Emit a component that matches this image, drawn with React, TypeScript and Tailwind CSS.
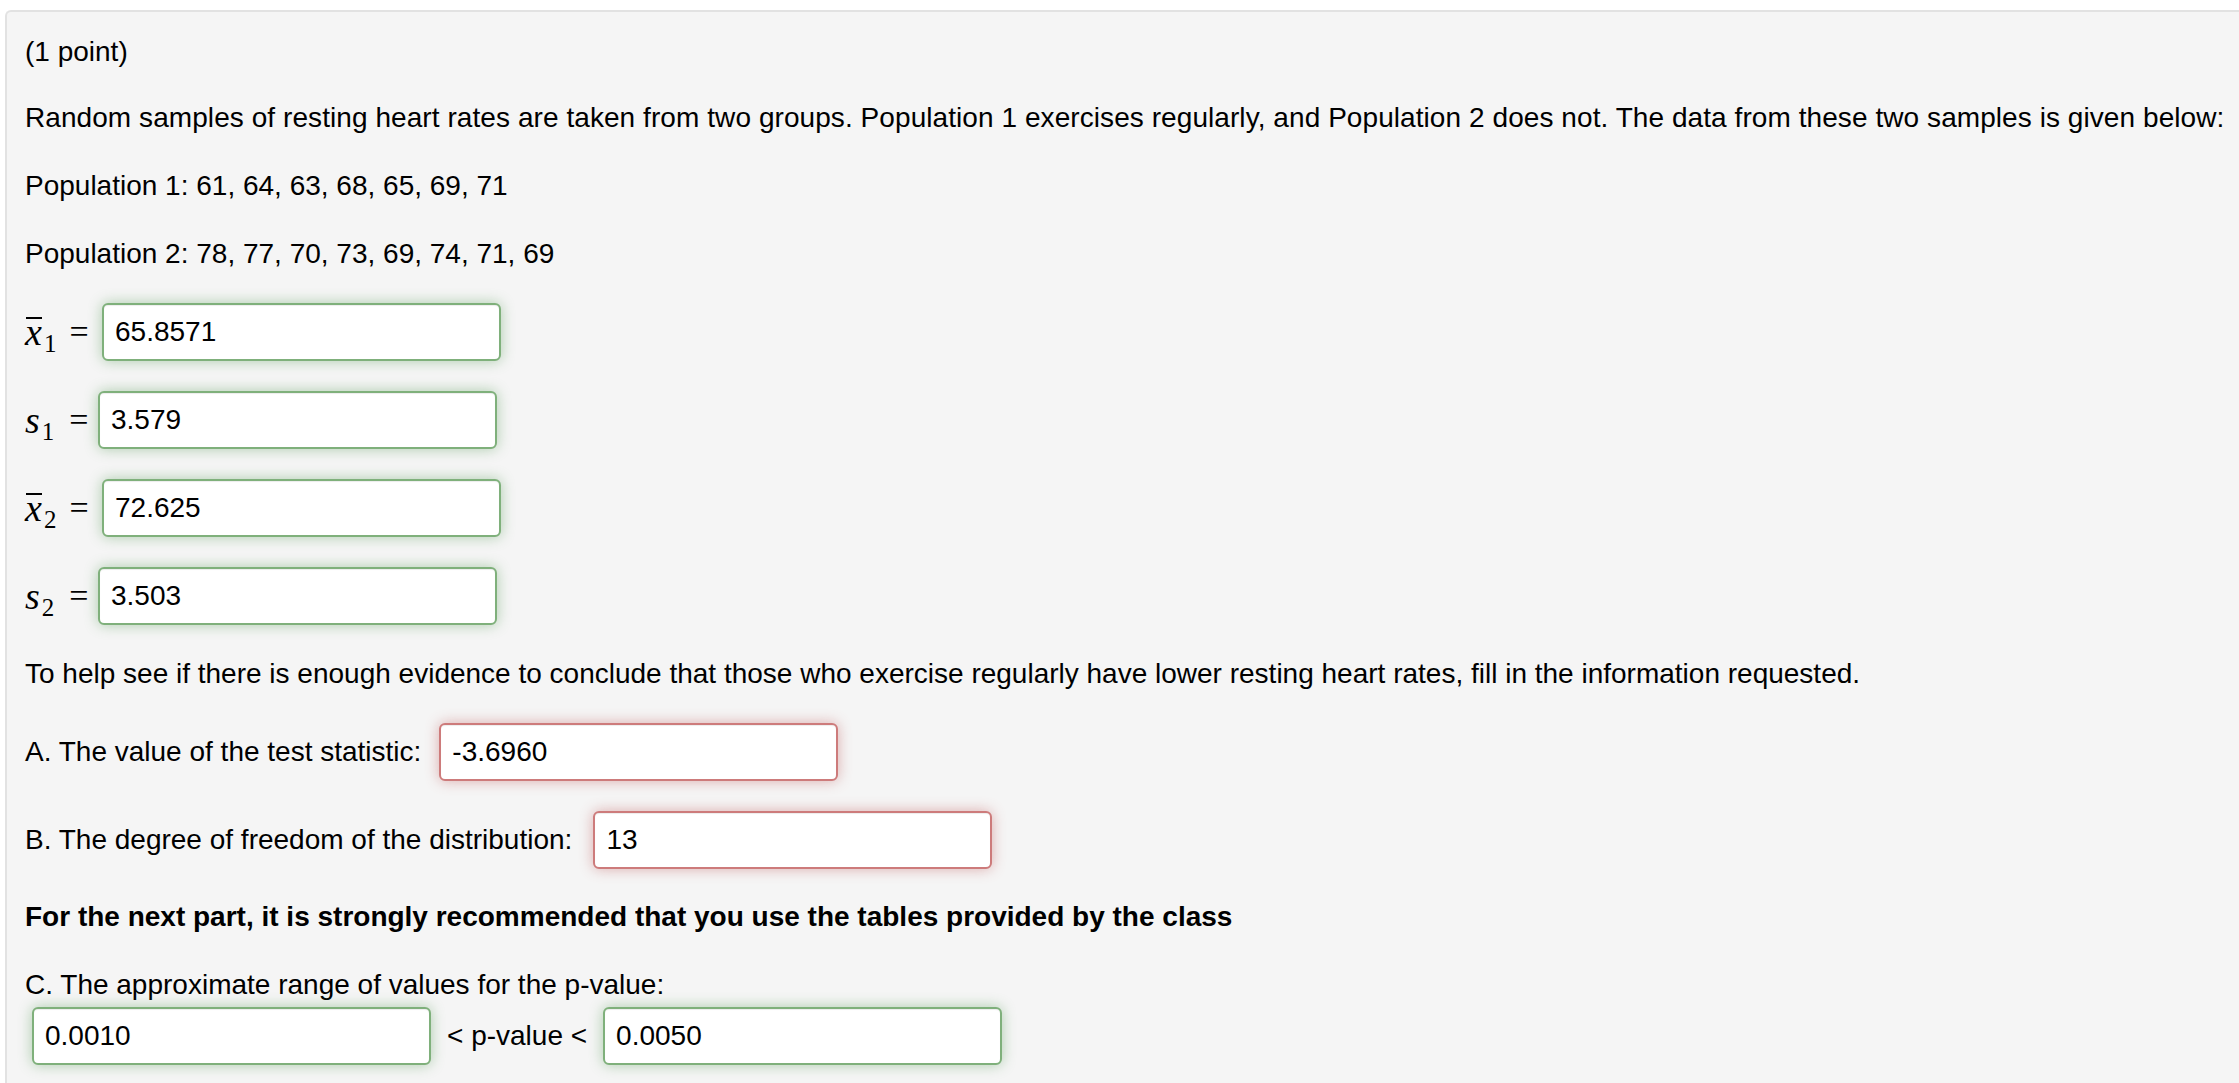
import type { ReactNode } from 'react';

type Tone = 'ok' | 'bad';

const toneClass: Record<Tone, string> = {
  ok: 'border-[#7fb07b] shadow-[inset_0_1px_1px_rgba(0,0,0,0.075),0_0_14px_rgba(81,153,81,0.45)]',
  bad: 'border-[#cd7b7b] shadow-[inset_0_1px_1px_rgba(0,0,0,0.075),0_0_14px_rgba(191,84,84,0.45)]',
};

function Answer({ value, tone }: { value: string; tone: Tone }) {
  return (
    <input
      readOnly
      value={value}
      className={`h-[58px] w-[399px] shrink-0 rounded-[6px] border-2 bg-white pl-[11px] text-[28px] text-black outline-none ${toneClass[tone]}`}
    />
  );
}

function MathVar({ letter, sub, bar }: { letter: string; sub: string; bar?: boolean }) {
  return (
    <span className="inline-flex items-baseline font-['Liberation_Serif','Times_New_Roman',serif] text-[38px] leading-none text-black">
      <span className="relative italic">
        {bar && <span className="absolute left-[1px] right-[0px] top-[4px] h-[2px] bg-black" />}
        {letter}
      </span>
      <span className="relative top-[7px] ml-[2px] text-[25px] not-italic">{sub}</span>
    </span>
  );
}

function VarRow({ label, value, wide }: { label: ReactNode; value: string; wide?: boolean }) {
  return (
    <div className="flex h-[58px] items-center">
      <div className={`flex items-center ${wide ? 'w-[77px]' : 'w-[73px]'}`}>
        {label}
        <span className={`font-['Liberation_Serif','Times_New_Roman',serif] text-[34px] leading-none ${wide ? 'ml-[13px]' : 'ml-[15px]'}`}>=</span>
      </div>
      <Answer value={value} tone="ok" />
    </div>
  );
}

export default function App() {
  return (
    <div className="h-[1083px] w-[2239px] overflow-hidden bg-white font-['Liberation_Sans',Arial,Helvetica,sans-serif] text-[28px] leading-[34px] text-black">
      <div className="ml-[5px] mt-[10px] min-h-[1100px] rounded-tl-[6px] border-l-2 border-t-2 border-[#e2e2e2] bg-[#f5f5f5] pl-[18px] pt-[23px]">
        <p>(1 point)</p>
        <p className="mt-[32px] whitespace-nowrap tracking-[0.07px]">
          Random samples of resting heart rates are taken from two groups. Population 1 exercises regularly, and Population 2 does not. The data from these two samples is given below:
        </p>
        <p className="mt-[34px]">Population 1: 61, 64, 63, 68, 65, 69, 71</p>
        <p className="mt-[34px]">Population 2: 78, 77, 70, 73, 69, 74, 71, 69</p>

        <div className="mt-[32px] flex flex-col gap-[30px]">
          <VarRow wide label={<MathVar letter="x" sub="1" bar />} value="65.8571" />
          <VarRow label={<MathVar letter="s" sub="1" />} value="3.579" />
          <VarRow wide label={<MathVar letter="x" sub="2" bar />} value="72.625" />
          <VarRow label={<MathVar letter="s" sub="2" />} value="3.503" />
        </div>

        <p className="mt-[32px]">
          To help see if there is enough evidence to conclude that those who exercise regularly have lower resting heart rates, fill in the information requested.
        </p>

        <div className="mt-[32px] flex h-[58px] items-center gap-[18px]">
          <span>A. The value of the test statistic:</span>
          <Answer value="-3.6960" tone="bad" />
        </div>
        <div className="mt-[30px] flex h-[58px] items-center gap-[21px]">
          <span>B. The degree of freedom of the distribution:</span>
          <Answer value="13" tone="bad" />
        </div>

        <p className="mt-[31px] font-bold">
          For the next part, it is strongly recommended that you use the tables provided by the class
        </p>

        <p className="mt-[34px]">C. The approximate range of values for the p-value:</p>
        <div className="ml-[7px] mt-[5px] flex h-[58px] items-center">
          <Answer value="0.0010" tone="ok" />
          <span className="mx-[16px]">&lt; p-value &lt;</span>
          <Answer value="0.0050" tone="ok" />
        </div>
      </div>
    </div>
  );
}
